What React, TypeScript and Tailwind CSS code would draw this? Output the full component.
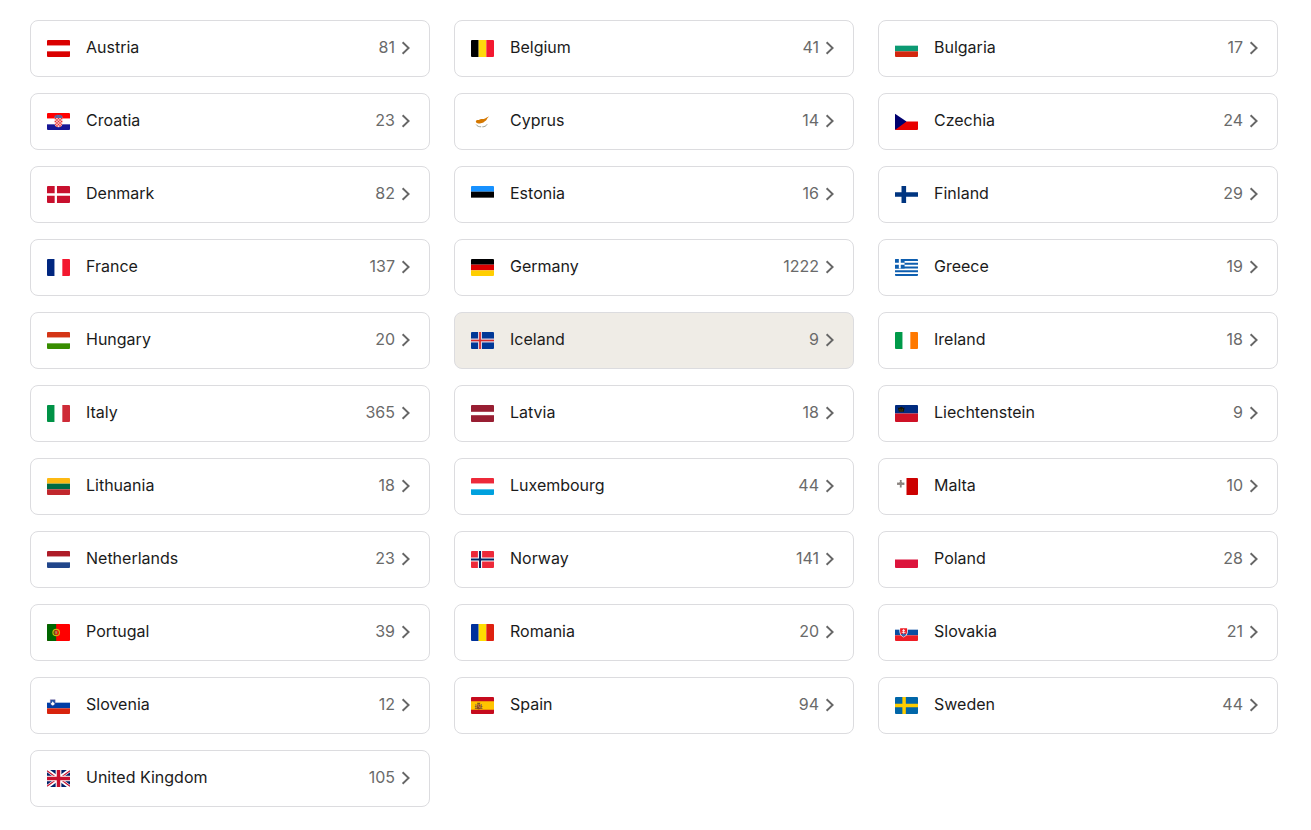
import type { ReactNode } from "react";

/** Three equal horizontal bands on a 24x18 field. */
function rows(a: string, b: string, c: string) {
  return (
    <>
      <rect width="24" height="6" fill={a} />
      <rect y="6" width="24" height="6" fill={b} />
      <rect y="12" width="24" height="6" fill={c} />
    </>
  );
}

/** Three equal vertical bands on a 24x18 field. */
function cols(a: string, b: string, c: string) {
  return (
    <>
      <rect width="8" height="18" fill={a} />
      <rect x="8" width="8" height="18" fill={b} />
      <rect x="16" width="8" height="18" fill={c} />
    </>
  );
}

const flags: Record<string, ReactNode> = {
  Austria: rows("#da0000", "#fff", "#da0000"),
  Belgium: cols("#000001", "#ffd90c", "#f31830"),
  Bulgaria: rows("#fff", "#0c9a73", "#d3270f"),
  Croatia: (
    <>
      {rows("#ff0000", "#fff", "#171796")}
      <path d="M8 4.6h8v6.4a4 4 0 0 1-8 0z" fill="#f8dcdc" />
      <path
        d="M8 5h1.6v1.6H8zM11.200 5h1.6v1.6h-1.6zM14.400 5H16v1.6h-1.6zM9.6 6.6h1.6v1.6H9.6zM12.8 6.6h1.6v1.6h-1.6zM8 8.2h1.6v1.6H8zM11.2 8.2h1.6v1.6h-1.6zM14.4 8.2H16v1.6h-1.6zM9.6 9.8h1.6v1.6H9.6zM12.8 9.8h1.6v1.6h-1.6zM8.200 11.4h1.4V13H8.700zM11.2 11.4h1.6V13h-1.6zM14.4 11.4h1.4L15.300 13h-.9zM9.6 13h1.6v1.6h-1.600zM12.8 13h1.6v1.6h-1.6z"
        fill="#ef2b2b"
      />
      <path d="M7.700 3.200l1.800-.8 1-.5 1.500.2 1.500-.2 1 .5 1.800.8-.7 2H8.400z" fill="#4b6fae" />
      <path d="M9.600 3h1v1.600h-1zM13.200 3h1v1.600h-1z" fill="#b2354c" />
    </>
  ),
  Cyprus: (
    <>
      <rect width="24" height="18" fill="#fff" />
      <path
        d="M5 9c.2-1.300 1.300-1.400 2.300-1.500 1.500-.1 2-1.200 3.200-1.200 1.200 0 2.300.2 3.500-.2 1.800-.6 3-1.700 4.800-2.600-.6 1.200-2 2-2.300 3-.1.900-.9 1.500-1.700 1.900-1 .5-1.400 1.500-2.600 1.800-1.500.4-2.500 1.100-4.200 1C6.200 11.100 5.300 10.200 5 9z"
        fill="#d57800"
      />
      <path d="M5.400 12.200c1.100 1.900 2.900 2.400 5.200 2.400M16.800 12c-.9 1.700-2.700 2.600-5 2.700" stroke="#7f8671" strokeWidth=".8" fill="none" />
    </>
  ),
  Czechia: (
    <>
      <rect width="24" height="18" fill="#fff" />
      <path d="M0 9h24v9H0z" fill="#e80000" />
      <path d="M0 .8L12 9 0 18z" fill="#00006f" />
    </>
  ),
  Denmark: (
    <>
      <rect width="24" height="18" fill="#c8102e" />
      <path d="M9.200 0v18M0 9h24" stroke="#fff" strokeWidth="2.400" />
    </>
  ),
  Estonia: (
    <>
      <rect width="24" height="6" fill="#1791ff" />
      <rect y="6" width="24" height="6.500" fill="#000001" />
      <rect y="12.500" width="24" height="5.500" fill="#fff" />
    </>
  ),
  Finland: (
    <>
      <rect width="24" height="18" fill="#fff" />
      <path d="M0 9h24M9.200 0v18" stroke="#003580" strokeWidth="4.800" />
    </>
  ),
  France: cols("#00267f", "#fff", "#f31830"),
  Germany: rows("#000001", "#dd0000", "#ffce00"),
  Greece: (
    <>
      <rect width="24" height="18" fill="#fff" />
      <path d="M0 1h24M0 5h24M0 9h24M0 13h24M0 17h24" stroke="#0d5eaf" strokeWidth="2" />
      <path d="M0 0h10v10H0z" fill="#0d5eaf" />
      <path d="M5 0v10M0 5h10" stroke="#fff" strokeWidth="2" />
    </>
  ),
  Hungary: rows("#d43516", "#fff", "#388d00"),
  Iceland: (
    <>
      <rect width="24" height="18" fill="#003897" />
      <path d="M9.400 0v18M0 9h24" stroke="#d9cfe2" strokeWidth="4.200" />
      <path d="M9.400 0v18M0 9h24" stroke="#d72828" strokeWidth="1.800" />
    </>
  ),
  Ireland: cols("#009a49", "#fff", "#ff7900"),
  Italy: cols("#009246", "#fff", "#ce2b37"),
  Latvia: (
    <>
      <rect width="24" height="18" fill="#981e32" />
      <rect y="7.200" width="24" height="3.600" fill="#fff" />
    </>
  ),
  Liechtenstein: (
    <>
      <rect width="24" height="9" fill="#002b7f" />
      <rect y="9" width="24" height="9" fill="#ce1126" />
      <path d="M3 2.600l1.300.5 1-.7 1.300-.5 1.200.5 1 .7L10 2.600 9.200 7.200H4z" fill="#141408" />
      <path d="M4.500 4.600h1.400M7 4.600h1.400M4.600 6.300h3.900" stroke="#655e18" strokeWidth=".6" />
    </>
  ),
  Lithuania: rows("#fdb913", "#006a44", "#c1272d"),
  Luxembourg: rows("#ed2939", "#fff", "#00a1de"),
  Malta: (
    <>
      <rect width="24" height="18" fill="#fff" />
      <path d="M12 0h12v18H12z" fill="#cc0000" />
      <path d="M5 2h2l-.2 3 3-.2v2.500l-3-.2L7 10H5l.2-2.900-3 .2V4.800l3 .2z" fill="#87807d" />
      <circle cx="6" cy="6" r="1.900" fill="#8d8682" />
    </>
  ),
  Netherlands: rows("#ae1c28", "#fff", "#21468b"),
  Norway: (
    <>
      <rect width="24" height="18" fill="#ed2939" />
      <path d="M9.400 0v18M0 9h24" stroke="#fff" strokeWidth="4.400" />
      <path d="M9.400 0v18M0 9h24" stroke="#002664" strokeWidth="2.200" />
    </>
  ),
  Poland: (
    <>
      <rect width="24" height="9" fill="#fff" />
      <rect y="9" width="24" height="9" fill="#dc143c" />
    </>
  ),
  Portugal: (
    <>
      <rect width="24" height="18" fill="#ff0000" />
      <rect width="9.600" height="18" fill="#006600" />
      <circle cx="9.600" cy="9" r="3.400" fill="none" stroke="#cdb512" strokeWidth="1.300" />
      <path d="M7.700 7h3.800v2.700a1.900 1.900 0 0 1-3.800 0z" fill="#e22a18" />
      <path d="M8.700 7.800h1.800v1.800a.9.9 0 0 1-1.800 0z" fill="#a8925a" />
    </>
  ),
  Romania: cols("#00319c", "#ffde00", "#de2110"),
  Slovakia: (
    <>
      {rows("#fff", "#0b4ea2", "#ee1c25")}
      <path d="M4.700 4h8.600c.3 4.800.2 8-4.300 10.300C4.500 12 4.400 8.800 4.700 4z" fill="#fff" />
      <path d="M5.400 4.600h7.200c.3 4.500 0 6.800-3.600 8.900-3.600-2.100-3.900-4.400-3.600-8.900z" fill="#ee1c25" />
      <path d="M9 5.400v5.400M7.600 6.800h2.800M7 8.800h4" stroke="#fff" strokeWidth=".9" />
      <path d="M6.200 11c1-.9 1.700-.6 2.800-1 1.100.4 1.800.1 2.800 1-.6 1-1.600 1.800-2.800 2.500-1.200-.7-2.200-1.500-2.800-2.500z" fill="#3466ad" />
    </>
  ),
  Slovenia: (
    <>
      {rows("#fff", "#003da5", "#d8230d")}
      <path d="M3.500 2.800h5v3.800c0 1.200-1 2-2.500 2.800-1.500-.8-2.500-1.600-2.500-2.800z" fill="#2454a8" stroke="#7d5a91" strokeWidth=".4" />
      <path d="M3.900 7.200l1.100-1.200 1-1.400 1 1.400 1.100 1.200c-.4.800-1.100 1.200-2.100 1.700-1-.5-1.700-.9-2.100-1.700z" fill="#fff" />
    </>
  ),
  Spain: (
    <>
      <rect width="24" height="18" fill="#c60b1e" />
      <rect y="4.500" width="24" height="9" fill="#ffc400" />
      <path d="M4.500 7.400h1v4.800h-1zM10.500 7.400h1v4.800h-1z" fill="#94774f" />
      <path d="M6 8h4v3.200a2 2 0 0 1-4 0z" fill="#93431e" />
      <path d="M6.300 6.200h3.400l-.4 1.600H6.700zM4 9.400h1.800v.8H4zM10.200 9.400H12v.8h-1.800zM4 12h8v.7H4z" fill="#7f5425" />
      <path d="M7 9h1v1H7zM8.300 10.200h1v1h-1z" fill="#d6b39e" />
    </>
  ),
  Sweden: (
    <>
      <rect width="24" height="18" fill="#0066a8" />
      <path d="M9.500 0v18M0 9h24" stroke="#fecc00" strokeWidth="3.600" />
    </>
  ),
  "United Kingdom": (
    <>
      <rect width="24" height="18" fill="#012169" />
      <path d="M0 0l24 18M24 0L0 18" stroke="#fff" strokeWidth="3.800" />
      <path d="M0 .8l10 7.400M24 17.200l-10-7.400M24 .8l-9 6.600M0 17.200l9-6.600" stroke="#c8102e" strokeWidth="1.100" />
      <path d="M12 0v18M0 9h24" stroke="#fff" strokeWidth="6" />
      <path d="M12 0v18M0 9h24" stroke="#c8102e" strokeWidth="3.600" />
    </>
  ),
};

const countries: [string, number][] = [
  ["Austria", 81],
  ["Belgium", 41],
  ["Bulgaria", 17],
  ["Croatia", 23],
  ["Cyprus", 14],
  ["Czechia", 24],
  ["Denmark", 82],
  ["Estonia", 16],
  ["Finland", 29],
  ["France", 137],
  ["Germany", 1222],
  ["Greece", 19],
  ["Hungary", 20],
  ["Iceland", 9],
  ["Ireland", 18],
  ["Italy", 365],
  ["Latvia", 18],
  ["Liechtenstein", 9],
  ["Lithuania", 18],
  ["Luxembourg", 44],
  ["Malta", 10],
  ["Netherlands", 23],
  ["Norway", 141],
  ["Poland", 28],
  ["Portugal", 39],
  ["Romania", 20],
  ["Slovakia", 21],
  ["Slovenia", 12],
  ["Spain", 94],
  ["Sweden", 44],
  ["United Kingdom", 105],
];

const HIGHLIGHTED = "Iceland";

function CountryCard({ name, count }: { name: string; count: number }) {
  const surface = name === HIGHLIGHTED ? "bg-[#efece6]" : "bg-white hover:bg-[#efece6]";
  return (
    <a
      href="#"
      className={`flex h-[57px] items-center rounded-lg border border-[#dcdcdf] pl-4 pr-[18px] ${surface}`}
    >
      <svg viewBox="0 0 24 18" preserveAspectRatio="none" className="h-[17px] w-[23px] shrink-0 rounded-[1px]" aria-hidden="true">
        {flags[name]}
      </svg>
      <span className="min-w-0 flex-1 pb-[3px] pl-4 text-base text-[#1b1b1b]">{name}</span>
      <span className="pb-[3px] text-base text-[#6a6a6a]">{count}</span>
      <svg viewBox="0 0 10 14" className="mb-px ml-1.5 h-[14px] w-[10px] shrink-0" fill="none" stroke="#666" strokeWidth="1.900" aria-hidden="true">
        <path d="M1.600 1.300L7.600 7l-6 5.700" />
      </svg>
    </a>
  );
}

export default function App() {
  return (
    <main className="min-h-screen bg-white pb-6 pl-[30px] pr-[33px] pt-5 font-['Inter','Liberation_Sans',sans-serif]">
      <ul className="grid grid-cols-1 gap-x-6 gap-y-4 sm:grid-cols-2 lg:grid-cols-3">
        {countries.map(([name, count]) => (
          <li key={name}>
            <CountryCard name={name} count={count} />
          </li>
        ))}
      </ul>
    </main>
  );
}
